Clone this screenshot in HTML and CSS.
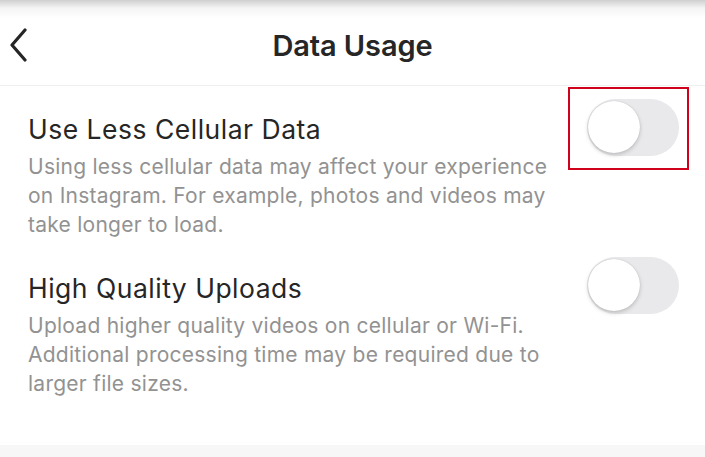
FILE: index.html
```html
<!DOCTYPE html>
<html lang="en">
<head>
  <meta charset="UTF-8" />
  <meta name="viewport" content="width=device-width, initial-scale=1.0" />
  <title>Data Usage</title>
  <link rel="stylesheet" href="styles.css">
</head>
<body>

  <header class="top-bar">
    <button class="back-btn" aria-label="Back">
      <svg width="20" height="36" viewBox="0 0 20 36">
        <polyline points="15,3 2,18 15,33" fill="none" stroke="#262626" stroke-width="3.2" stroke-linecap="round" stroke-linejoin="round" />
      </svg>
    </button>
    <h1>Data Usage</h1>
  </header>

  <div class="settings">
    <div class="setting-row">
      <div class="setting-text">
        <h2>Use Less Cellular Data</h2>
        <p>Using less cellular data may affect your experience on Instagram. For example, photos and videos may take longer to load.</p>
      </div>
      <div class="toggle-wrap highlighted">
        <span class="toggle"><span class="knob"></span></span>
      </div>
    </div>

    <div class="setting-row">
      <div class="setting-text">
        <h2>High Quality Uploads</h2>
        <p>Upload higher quality videos on cellular or Wi-Fi. Additional processing time may be required due to larger file sizes.</p>
      </div>
      <div class="toggle-wrap">
        <span class="toggle"><span class="knob"></span></span>
      </div>
    </div>
  </div>

  <div class="bottom-strip"></div>

</body>
</html>
```

FILE: styles.css
```css
body {
  font-family: Inter, "Noto Sans", sans-serif;
  margin: 0;
  padding: 0;
  background: #fff;
  color: #262626;
  height: 457px;
  display: flex;
  flex-direction: column;
  overflow: hidden;
}
.top-bar {
  height: 85px;
  display: flex;
  align-items: center;
  justify-content: center;
  position: relative;
  border-bottom: 1px solid #efefef;
  background: linear-gradient(#cfcfcf 0, #f4f4f4 8px, #fff 18px);
}
.top-bar h1 {
  margin: 6px 0 0;
  font-size: 29px;
  font-weight: 600;
  letter-spacing: -0.1px;
}
.back-btn {
  position: absolute;
  left: 10px;
  top: 27px;
  background: none;
  border: none;
  padding: 0;
}
.settings {
  flex: 1;
}
.setting-row {
  display: flex;
  align-items: flex-start;
  justify-content: space-between;
  padding: 13px 26px 0 28px;
}
.setting-row + .setting-row {
  padding-top: 18px;
}
.setting-text h2 {
  margin: 12px 0 5px;
  font-size: 26.5px;
  font-weight: 400;
  line-height: 36px;
  letter-spacing: 0.5px;
  color: #262626;
}
.setting-row + .setting-row h2 {
  margin-top: 13px;
}
.setting-text p {
  margin: 0;
  width: 535px;
  font-size: 21px;
  line-height: 29px;
  letter-spacing: 0.25px;
  color: #929292;
}
.toggle-wrap.highlighted {
  margin-top: -12px;
  margin-right: -10px;
  padding: 10px 8px 12px 17px;
  border: 2px solid #d0021b;
}
.toggle {
  display: block;
  width: 92px;
  height: 57px;
  border-radius: 29px;
  background: #e9e9eb;
  position: relative;
}
.knob {
  position: absolute;
  left: 1px;
  top: 2px;
  width: 52px;
  height: 52px;
  border-radius: 50%;
  background: #fff;
  box-shadow: 0 2px 4px rgba(0,0,0,0.18), 0 0 1px rgba(0,0,0,0.2);
}
.bottom-strip {
  height: 12px;
  background: #f7f7f7;
}
```
